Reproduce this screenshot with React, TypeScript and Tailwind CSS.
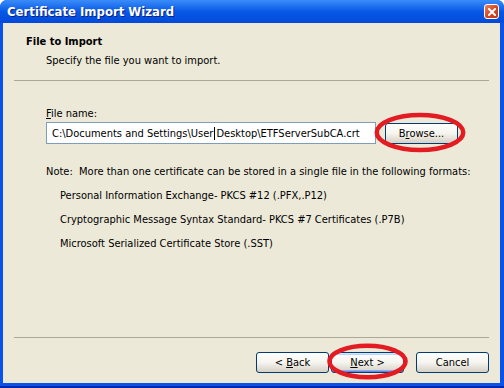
import React from 'react';

const font = "font-['Tahoma','DejaVu_Sans_Condensed','Liberation_Sans',sans-serif]";

interface XpButtonProps {
  children: React.ReactNode;
  isDefault?: boolean;
}
const XpButton: React.FC<XpButtonProps> = ({ children, isDefault }) => (
  <button
    className={`h-[21px] w-[73px] rounded-[3px] border border-[#003C74] bg-gradient-to-b from-white via-[#F5F4EF] to-[#D6D0C5] text-[11px] leading-[13px] text-black ${
      isDefault ? 'shadow-[inset_0_1px_0_#CEE7FF,inset_0_2px_0_#BCD4F6,inset_0_-1px_0_#6982EE,inset_0_-2px_0_#89ADE4]' : ''
    }`}
  >
    {children}
  </button>
);

const Ellipse: React.FC<{ className: string }> = ({ className }) => (
  <svg className={`pointer-events-none absolute ${className}`} viewBox="0 0 100 40" preserveAspectRatio="none">
    <ellipse cx="50" cy="20" rx="47" ry="17" fill="none" stroke="#E31B23" strokeWidth="4.5" vectorEffect="non-scaling-stroke" />
  </svg>
);

export default function App() {
  return (
    <div className={`relative flex h-[388px] w-[504px] flex-col overflow-hidden rounded-t-[7px] bg-[#0A52E8] border-b-2 border-[#0028B0] ${font} antialiased`}>
      {/* title bar */}
      <div className="flex h-[23px] shrink-0 items-center justify-between bg-gradient-to-b from-[#3A8CF8] via-[#0758E6] to-[#0449DA] pl-[7px] pr-[5px]">
        <span className="text-[13px] font-bold leading-none text-white [text-shadow:1px_1px_0_#0A1E80]">Certificate Import Wizard</span>
        <div className="flex h-[15px] w-[15px] items-center justify-center rounded-[3px] border border-white bg-gradient-to-br from-[#E9825F] via-[#D9451F] to-[#C23A14]">
          <svg width="8" height="8" viewBox="0 0 8 8">
            <path d="M1 1L7 7M7 1L1 7" stroke="white" strokeWidth="2" strokeLinecap="square" />
          </svg>
        </div>
      </div>

      {/* body */}
      <div className="ml-[3px] mr-[4px] mb-[3px] flex flex-1 flex-col bg-[#ECE9D8] text-[11px] leading-[13px] text-black">
        <div className="pl-[23px] pt-[12px]">
          <div className="text-[11px] font-bold">File to Import</div>
          <div className="mt-[6px] pl-[20px]">Specify the file you want to import.</div>
        </div>
        <div className="mx-[11px] mt-[13px] h-px bg-[#ACA899]" />

        <div className="pl-[43px] pt-[26px]">
          <div>
            <span className="underline">F</span>ile name:
          </div>
          <div className="mt-[2px] flex items-center gap-[9px]">
            <div className="flex h-[22px] w-[330px] items-center border border-[#7F9DB9] bg-white pl-[5px]">
              C:\Documents and Settings\User
              <span className="mx-px inline-block h-[13px] w-px bg-black" />
              Desktop\ETFServerSubCA.crt
            </div>
            <XpButton>
              B<span className="underline">r</span>owse...
            </XpButton>
          </div>
          <div className="mt-[21px]">Note:&nbsp; More than one certificate can be stored in a single file in the following formats:</div>
          <div className="mt-[11px] flex flex-col gap-[11px] pl-[14px]">
            <div>Personal Information Exchange- PKCS #12 (.PFX,.P12)</div>
            <div>Cryptographic Message Syntax Standard- PKCS #7 Certificates (.P7B)</div>
            <div>Microsoft Serialized Certificate Store (.SST)</div>
          </div>
        </div>

        <div className="flex-1" />
        <div className="mx-[11px] h-px bg-[#ACA899]" />
        <div className="flex justify-end pb-[10px] pr-[11px] pt-[14px]">
          <XpButton>
            &lt; <span className="underline">B</span>ack
          </XpButton>
          <div className="ml-[2px]">
            <XpButton isDefault>
              <span className="underline">N</span>ext &gt;
            </XpButton>
          </div>
          <div className="ml-[12px]">
            <XpButton>Cancel</XpButton>
          </div>
        </div>
      </div>

      <Ellipse className="left-[374px] top-[112px] h-[41px] w-[92px]" />
      <Ellipse className="left-[327px] top-[343px] h-[37px] w-[81px]" />
    </div>
  );
}
